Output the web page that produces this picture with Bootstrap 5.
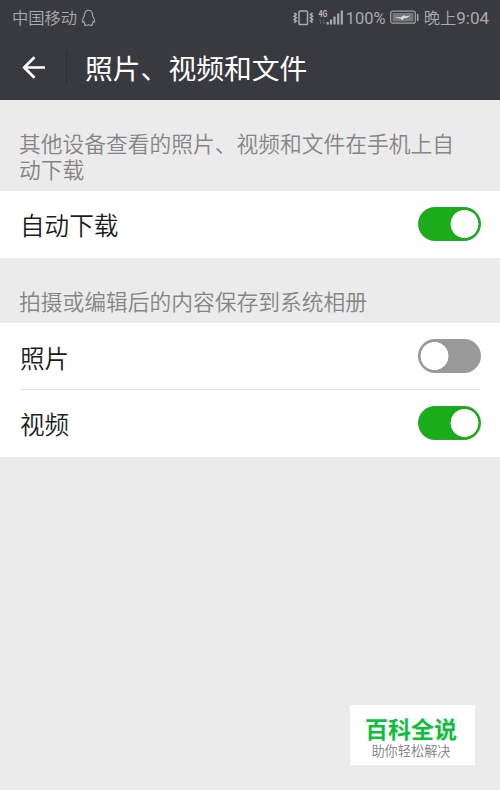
<!DOCTYPE html>
<html lang="zh-CN">
<head>
<meta charset="utf-8">
<meta name="viewport" content="width=device-width, initial-scale=1">
<title>照片、视频和文件</title>
<link href="https://cdn.jsdelivr.net/npm/bootstrap@5.3.0/dist/css/bootstrap.min.css" rel="stylesheet">
<style>
body{background:#ebebeb;font-family:Roboto,"Noto Sans CJK SC",sans-serif;color:#2b2b2b;overflow:hidden;height:790px}
.topbar{background:#393a3f;height:100px}
.status{height:35px;padding:0 11px 0 12px;color:#a9aaad;font-size:16.3px;font-weight:350;line-height:35px;white-space:nowrap}
.status span{padding-top:1px}
.pct{font-weight:400;font-size:16.4px;margin-left:2px;width:41px;letter-spacing:.1px}
.batt{margin-left:3px}
.clock{margin-left:5px}
.digits{font-weight:400;font-size:17px}
.titlebar{height:65px;padding-left:22px}
.sep{width:1px;height:33px;background:#2e2f33;margin-left:20px}
.page-title{font-size:27.8px;line-height:65px;margin-left:18px;padding-top:3px;color:#fff;font-weight:400}
.note{font-size:21.75px;line-height:26px;color:#858585;font-weight:350;padding:0 19px;white-space:nowrap}
.note-a{height:91px;padding-top:32px}
.note-b{height:65px;padding-top:32px}
.setting{font-size:24.6px;font-weight:350;height:67px;color:#1c1c1c;padding:0 19px 0 20px}
.setting span{padding-top:6px}
.setting-lined{height:66px}
.setting-lined span{padding-top:8px}
.switch.form-check-input{width:63px;height:34px;margin:0 0 1px;border:0;background-color:#999;background-size:29px 28px;background-position:2px center;background-repeat:no-repeat;border-radius:17px;
background-image:radial-gradient(circle,#fff 13.7px,transparent 14.2px)}
.switch.form-check-input:checked{background-color:#1aad19;background-position:31.5px center;box-shadow:inset 0 0 0 1px #2ea336}
.divider{height:1px;background:#e2e2e2;margin:0 20px}
.brand{left:350px;top:705px;width:125px;height:60px;background:#fff}
.brand-name{font-size:23px;line-height:24px;font-weight:700;color:#0bc13b;padding-top:14px;margin-left:-3px}
.brand-sub{font-size:13.2px;line-height:16px;font-weight:350;color:#808080;padding-top:1px;margin-left:-3px}
</style>
<script src="https://cdn.jsdelivr.net/npm/bootstrap@5.3.0/dist/js/bootstrap.bundle.min.js"></script>
</head>
<body>
<header class="topbar">
  <div class="status d-flex align-items-center">
    <span>中国移动</span>
    <svg class="ms-1" width="15" height="18" viewBox="0 0 15 18" fill="none" stroke="#a6a7aa" stroke-width="1.1"><path d="M3.500 6.300C3.500 3 5 1.300 7.500 1.300s4 1.700 4 5c0 1.200 2.200 3.600 2.200 6 0 1-.7 1.200-1.500.2-.1 1-.6 1.800-1.200 2.500.8.5.6 1.400-.5 1.400-1.200 0-2-.2-3-.8-1 .6-1.800.8-3 .8-1.100 0-1.300-.9-.5-1.400-.6-.7-1.100-1.500-1.200-2.500-.8 1-1.500.8-1.500-.2 0-2.400 2.200-4.800 2.200-6z"/></svg>
    <svg class="ms-auto flex-shrink-0" width="52" height="20" viewBox="0 0 52 20" fill="none" stroke="#a9aaad">
      <rect x="7" y="3" width="8.500" height="13.500" rx=".8" stroke-width="1.500"/>
      <path stroke-width="1.700" d="M2.200 5l2 1.600-2 1.600 2 1.600-2 1.600 2 1.600-2 1.600M20.500 5l-2 1.600 2 1.600-2 1.600 2 1.600-2 1.600 2 1.600"/>
      <text x="26.500" y="8.500" font-family="Roboto,sans-serif" font-size="8.500" font-weight="700" textLength="9" lengthAdjust="spacingAndGlyphs" fill="#b8b9bc" stroke="none">4G</text>
      <path stroke="#5d5e63" d="M28.500 11.500v4.500M27 13l1.500-1.500M31.500 11.500v4.500M33 14.500l-1.500 1.500"/>
      <path stroke-width="2.200" d="M35.700 16.500v-2.500M39 16.500v-5M42.500 16.500V8.500M46.200 16.500V5.500M49.800 16.500V2.500"/>
    </svg>
    <span class="pct">100%</span>
    <svg class="batt flex-shrink-0" width="29" height="15" viewBox="0 0 29 15">
      <rect x=".7" y="1.200" width="24.600" height="12" rx="2" fill="none" stroke="#a0a1a4" stroke-width="1.200"/>
      <rect x="2.500" y="3" width="21" height="8.400" rx=".6" fill="#76777b"/>
      <path d="M4.500 7l6.500.3L14 5l1 1.300 5.500-.8-3.500 2.500-3 .2-1.500 2.300-1.500-1.500z" fill="#d8d9db"/>
      <path d="M27.700 4v7" stroke="#a6a7aa" stroke-width="1.500"/>
    </svg>
    <span class="clock">晚上<span class="digits">9:04</span></span>
  </div>
  <div class="titlebar d-flex align-items-center">
    <svg width="24" height="24" viewBox="0 0 24 24" fill="none" stroke="#fff" stroke-width="2.700"><path d="M23 11.500H3M12.500 1.200L2.200 11.500l10.300 10.300"/></svg>
    <div class="sep"></div>
    <h1 class="page-title mb-0">照片、视频和文件</h1>
  </div>
</header>
<main>
  <div class="note note-a">其他设备查看的照片、视频和文件在手机上自<br>动下载</div>
  <label class="setting bg-white d-flex align-items-center justify-content-between"><span>自动下载</span><input class="form-check-input switch" type="checkbox" role="switch" checked></label>
  <div class="note note-b">拍摄或编辑后的内容保存到系统相册</div>
  <section class="bg-white">
    <label class="setting setting-lined d-flex align-items-center justify-content-between"><span>照片</span><input class="form-check-input switch" type="checkbox" role="switch"></label>
    <div class="divider"></div>
    <label class="setting d-flex align-items-center justify-content-between"><span>视频</span><input class="form-check-input switch" type="checkbox" role="switch" checked></label>
  </section>
</main>
<aside class="brand position-absolute text-center">
  <div class="brand-name">百科全说</div>
  <div class="brand-sub">助你轻松解决</div>
</aside>
</body>
</html>
